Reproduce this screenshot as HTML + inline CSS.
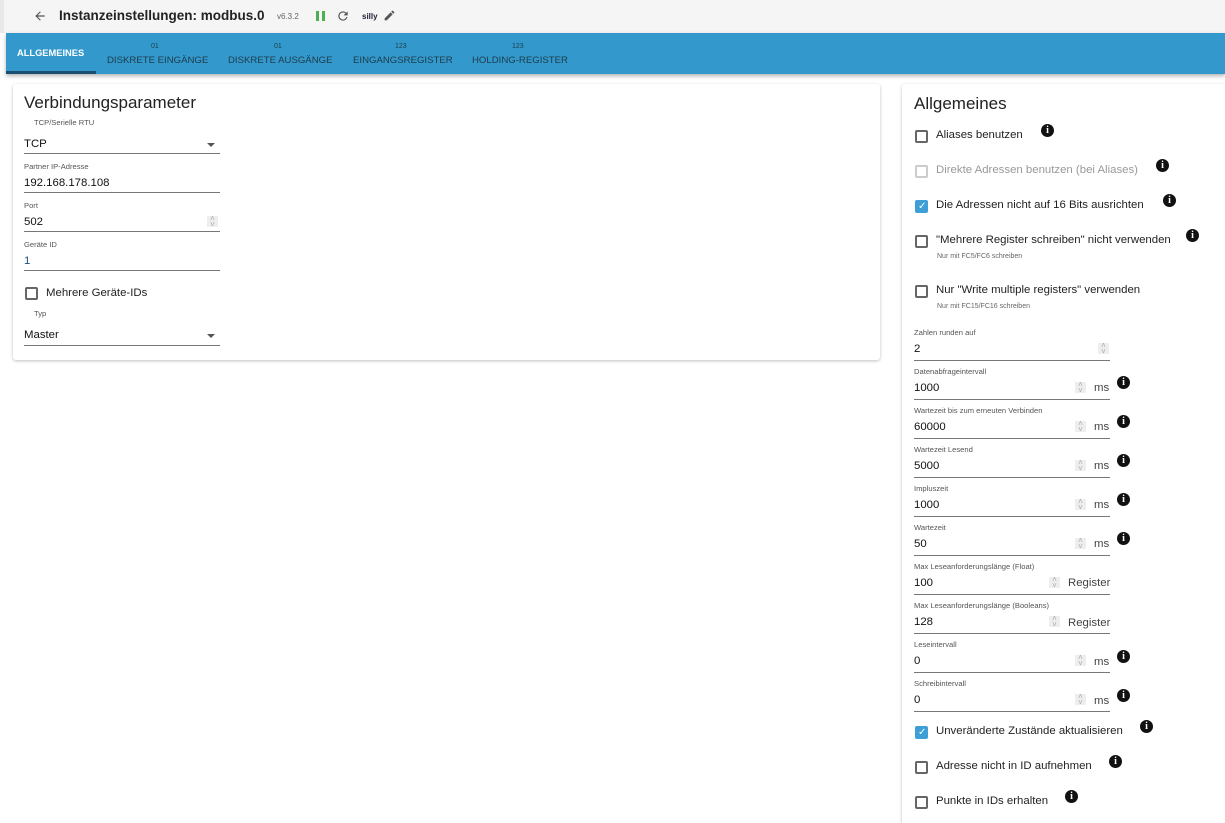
<!DOCTYPE html>
<html><head><meta charset="utf-8"><style>
*{box-sizing:border-box;margin:0;padding:0}
html,body{width:1225px;height:823px;overflow:hidden}
body{background:#fff;font-family:"Liberation Sans",sans-serif;color:#222;position:relative}
.a{position:absolute;white-space:nowrap}
.hdr{left:0;top:0;width:1225px;height:33px;background:#f5f5f5;border-left:4px solid #e8e8e8}
.tabs{left:6px;top:33px;width:1219px;height:41px;background:#3399cc;box-shadow:0 2px 4px rgba(0,0,0,.3)}
.tab{color:#1d3b4a;font-size:9.6px;text-align:center}
.sm{font-size:7px;color:#1d3b4a}
.card{background:#fff;box-shadow:0 1px 3px rgba(0,0,0,.25);border-radius:3px}
.lbl{font-size:7.6px;color:#555}
.val{font-size:11.4px;color:#111}
.ul{height:1px;background:#777}
.cb{width:13px;height:13px;border:2px solid #666;border-radius:2px}
.cbl{font-size:11.4px;color:#222}
.chk{background:#3d9fd6;border-color:#3d9fd6}
.inf{width:13px;height:13px;border-radius:50%;background:#111;color:#fff;font-size:10px;font-weight:bold;text-align:center;line-height:13px;font-family:"Liberation Serif",serif}
.spin{width:11px;height:11px;background:#eee;color:#aaa;font-size:8px;text-align:center;line-height:6px;overflow:hidden}
.unit{font-size:11.4px;color:#444}
.help{font-size:7px;color:#666}
</style></head><body>
<div class="a hdr"></div>
<svg class="a" style="left:33px;top:9px" width="14" height="14" viewBox="0 0 24 24"><path d="M20 11H7.8l5.6-5.6L12 4l-8 8 8 8 1.4-1.4L7.8 13H20z" fill="#555"/></svg>
<div class="a" style="left:59px;top:8px;font-size:13.5px;font-weight:bold;color:#222">Instanzeinstellungen: modbus.0</div>
<div class="a" style="left:277px;top:12px;font-size:8px;color:#666">v6.3.2</div>
<div class="a" style="left:316px;top:11px;width:3px;height:10px;background:#4caf50"></div>
<div class="a" style="left:322px;top:11px;width:3px;height:10px;background:#4caf50"></div>
<svg class="a" style="left:336px;top:9px" width="14" height="14" viewBox="0 0 24 24"><path d="M17.65 6.35A7.96 7.96 0 0 0 12 4a8 8 0 1 0 7.73 10h-2.08A6 6 0 1 1 12 6c1.66 0 3.14.69 4.22 1.78L13 11h7V4z" fill="#555"/></svg>
<div class="a" style="left:362px;top:12px;font-size:8px;font-weight:bold;color:#223">silly</div>
<svg class="a" style="left:383px;top:9px" width="13" height="13" viewBox="0 0 24 24"><path d="M3 17.25V21h3.75L17.8 9.94l-3.75-3.75zM20.7 7.04a1 1 0 0 0 0-1.41l-2.34-2.34a1 1 0 0 0-1.41 0l-1.83 1.83 3.75 3.75z" fill="#555"/></svg>
<div class="a tabs"></div>
<div class="a" style="left:6px;top:71px;width:90px;height:3px;background:#1a4f6e"></div>
<div class="a tab" style="left:17px;top:48px;color:#fff;font-weight:bold;font-size:9.3px">ALLGEMEINES</div>
<div class="a sm" style="left:151px;top:43px">01</div><div class="a tab" style="left:107px;top:55px">DISKRETE EINGÄNGE</div>
<div class="a sm" style="left:274px;top:43px">01</div><div class="a tab" style="left:228px;top:55px">DISKRETE AUSGÄNGE</div>
<div class="a sm" style="left:395px;top:43px">123</div><div class="a tab" style="left:353px;top:55px">EINGANGSREGISTER</div>
<div class="a sm" style="left:512px;top:43px">123</div><div class="a tab" style="left:472px;top:55px">HOLDING-REGISTER</div>

<div class="a card" style="left:13px;top:84px;width:867px;height:276px"></div>
<div class="a" style="left:24px;top:93px;font-size:17px;color:#222">Verbindungsparameter</div>
<div class="a lbl" style="left:34px;top:118px">TCP/Serielle RTU</div>
<div class="a val" style="left:24px;top:138px">TCP</div>
<div class="a" style="left:207px;top:143px;border:4px solid transparent;border-top:4px solid #555"></div>
<div class="a ul" style="left:24px;top:153px;width:196px"></div>
<div class="a lbl" style="left:24px;top:162px">Partner IP-Adresse</div>
<div class="a val" style="left:24px;top:177px">192.168.178.108</div>
<div class="a ul" style="left:24px;top:192px;width:196px"></div>
<div class="a lbl" style="left:24px;top:201px">Port</div>
<div class="a val" style="left:24px;top:216px">502</div>
<div class="a spin" style="left:207px;top:216px">˄<br>˅</div>
<div class="a ul" style="left:24px;top:231px;width:196px"></div>
<div class="a lbl" style="left:24px;top:240px">Geräte ID</div>
<div class="a val" style="left:24px;top:255px;color:#1a4f80">1</div>
<div class="a ul" style="left:24px;top:270px;width:196px"></div>
<div class="a cb" style="left:25px;top:287px"></div>
<div class="a cbl" style="left:46px;top:287px">Mehrere Geräte-IDs</div>
<div class="a lbl" style="left:34px;top:309px">Typ</div>
<div class="a val" style="left:24px;top:329px">Master</div>
<div class="a" style="left:207px;top:334px;border:4px solid transparent;border-top:4px solid #555"></div>
<div class="a ul" style="left:24px;top:345px;width:196px"></div>

<div class="a card" style="left:902px;top:84px;width:330px;height:760px"></div>
<div class="a" style="left:914px;top:94px;font-size:17px;color:#222">Allgemeines</div>

<div class="a cb" style="left:915px;top:130px"></div><div class="a cbl" style="left:936px;top:129px">Aliases benutzen</div><div class="a inf" style="left:1041px;top:124px">i</div>
<div class="a cb" style="left:915px;top:165px;border-color:#ccc"></div><div class="a cbl" style="left:936px;top:164px;color:#999">Direkte Adressen benutzen (bei Aliases)</div><div class="a inf" style="left:1156px;top:159px">i</div>
<div class="a cb chk" style="left:915px;top:200px"></div><div class="a" style="left:918px;top:201px;color:#fff;font-size:10px">✓</div><div class="a cbl" style="left:936px;top:199px">Die Adressen nicht auf 16 Bits ausrichten</div><div class="a inf" style="left:1163px;top:194px">i</div>
<div class="a cb" style="left:915px;top:235px"></div><div class="a cbl" style="left:936px;top:234px">"Mehrere Register schreiben" nicht verwenden</div><div class="a inf" style="left:1186px;top:229px">i</div>
<div class="a help" style="left:937px;top:253px">Nur mit FC5/FC6 schreiben</div>
<div class="a cb" style="left:915px;top:285px"></div><div class="a cbl" style="left:936px;top:284px">Nur "Write multiple registers" verwenden</div>
<div class="a help" style="left:937px;top:303px">Nur mit FC15/FC16 schreiben</div>

<div class="a lbl" style="left:914px;top:328px">Zahlen runden auf</div>
<div class="a val" style="left:914px;top:343px">2</div>
<div class="a spin" style="left:1098px;top:343px">˄<br>˅</div>
<div class="a ul" style="left:914px;top:360px;width:196px"></div>

<div class="a lbl" style="left:914px;top:367px">Datenabfrageintervall</div><div class="a val" style="left:914px;top:382px">1000</div><div class="a spin" style="left:1075px;top:382px">˄<br>˅</div><div class="a unit" style="left:1094px;top:382px">ms</div><div class="a ul" style="left:914px;top:399px;width:196px"></div><div class="a inf" style="left:1117px;top:376px">i</div>
<div class="a lbl" style="left:914px;top:406px">Wartezeit bis zum erneuten Verbinden</div><div class="a val" style="left:914px;top:421px">60000</div><div class="a spin" style="left:1075px;top:421px">˄<br>˅</div><div class="a unit" style="left:1094px;top:421px">ms</div><div class="a ul" style="left:914px;top:438px;width:196px"></div><div class="a inf" style="left:1117px;top:415px">i</div>
<div class="a lbl" style="left:914px;top:445px">Wartezeit Lesend</div><div class="a val" style="left:914px;top:460px">5000</div><div class="a spin" style="left:1075px;top:460px">˄<br>˅</div><div class="a unit" style="left:1094px;top:460px">ms</div><div class="a ul" style="left:914px;top:477px;width:196px"></div><div class="a inf" style="left:1117px;top:454px">i</div>
<div class="a lbl" style="left:914px;top:484px">Impluszeit</div><div class="a val" style="left:914px;top:499px">1000</div><div class="a spin" style="left:1075px;top:499px">˄<br>˅</div><div class="a unit" style="left:1094px;top:499px">ms</div><div class="a ul" style="left:914px;top:516px;width:196px"></div><div class="a inf" style="left:1117px;top:493px">i</div>
<div class="a lbl" style="left:914px;top:523px">Wartezeit</div><div class="a val" style="left:914px;top:538px">50</div><div class="a spin" style="left:1075px;top:538px">˄<br>˅</div><div class="a unit" style="left:1094px;top:538px">ms</div><div class="a ul" style="left:914px;top:555px;width:196px"></div><div class="a inf" style="left:1117px;top:532px">i</div>
<div class="a lbl" style="left:914px;top:562px">Max Leseanforderungslänge (Float)</div><div class="a val" style="left:914px;top:577px">100</div><div class="a spin" style="left:1049px;top:577px">˄<br>˅</div><div class="a unit" style="left:1068px;top:577px">Register</div><div class="a ul" style="left:914px;top:594px;width:196px"></div>
<div class="a lbl" style="left:914px;top:601px">Max Leseanforderungslänge (Booleans)</div><div class="a val" style="left:914px;top:616px">128</div><div class="a spin" style="left:1049px;top:616px">˄<br>˅</div><div class="a unit" style="left:1068px;top:617px">Register</div><div class="a ul" style="left:914px;top:633px;width:196px"></div>
<div class="a lbl" style="left:914px;top:640px">Leseintervall</div><div class="a val" style="left:914px;top:655px">0</div><div class="a spin" style="left:1075px;top:655px">˄<br>˅</div><div class="a unit" style="left:1094px;top:656px">ms</div><div class="a ul" style="left:914px;top:672px;width:196px"></div><div class="a inf" style="left:1117px;top:650px">i</div>
<div class="a lbl" style="left:914px;top:679px">Schreibintervall</div><div class="a val" style="left:914px;top:694px">0</div><div class="a spin" style="left:1075px;top:694px">˄<br>˅</div><div class="a unit" style="left:1094px;top:695px">ms</div><div class="a ul" style="left:914px;top:711px;width:196px"></div><div class="a inf" style="left:1117px;top:689px">i</div>

<div class="a cb chk" style="left:915px;top:726px"></div><div class="a" style="left:918px;top:727px;color:#fff;font-size:10px">✓</div><div class="a cbl" style="left:936px;top:725px">Unveränderte Zustände aktualisieren</div><div class="a inf" style="left:1140px;top:720px">i</div>
<div class="a cb" style="left:915px;top:761px"></div><div class="a cbl" style="left:936px;top:760px">Adresse nicht in ID aufnehmen</div><div class="a inf" style="left:1109px;top:755px">i</div>
<div class="a cb" style="left:915px;top:796px"></div><div class="a cbl" style="left:936px;top:795px">Punkte in IDs erhalten</div><div class="a inf" style="left:1065px;top:790px">i</div>
</body></html>
